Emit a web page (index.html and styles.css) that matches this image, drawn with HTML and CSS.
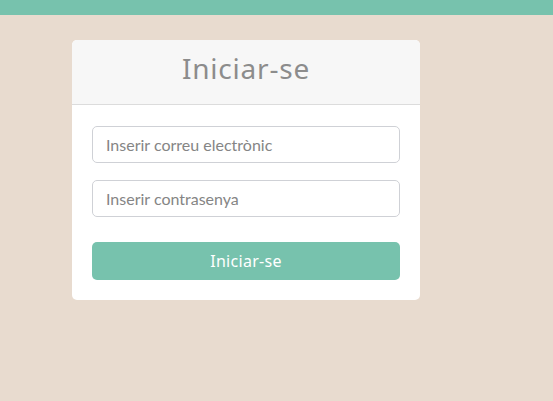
FILE: index.html
```html
<!DOCTYPE html>
<html lang="ca">
<head>
<meta charset="utf-8">
<title>Iniciar-se</title>
<link rel="stylesheet" href="styles.css">
</head>
<body>
<div class="topbar"></div>
<main class="page">
  <section class="card">
    <header class="card-header"><h1 class="title">Iniciar-se</h1></header>
    <form class="card-body">
      <input class="field" type="email" placeholder="Inserir correu electrònic">
      <input class="field" type="password" placeholder="Inserir contrasenya">
      <button class="btn" type="button">Iniciar-se</button>
    </form>
  </section>
</main>
</body>
</html>
```
FILE: styles.css
```css
* { box-sizing: border-box; }
html, body { margin: 0; padding: 0; }
body {
  background: #e8dbcf;
  font-family: "Open Sans", "Liberation Sans", sans-serif;
  height: 401px;
}
.topbar { height: 15px; background: #77c2ad; }
.page { padding: 25px 0 0 72px; }
.card {
  width: 348px;
  background: #fff;
  border-radius: 5px;
  overflow: hidden;
}
.card-header {
  height: 65px;
  background: #f7f7f7;
  border-bottom: 1px solid #dcdcdc;
  display: flex;
  justify-content: center;
  align-items: center;
}
.title {
  margin: 0;
  font-family: "Noto Sans", "Open Sans", sans-serif;
  font-weight: 400;
  font-size: 28px;
  color: #8c8c8c;
  letter-spacing: 0.8px;
  padding-bottom: 9px;
}
.card-body {
  padding: 21px 20px 20px;
  display: flex;
  flex-direction: column;
}
.field {
  height: 37px;
  border: 1px solid #cfd1d6;
  border-radius: 5px;
  padding: 0 13px;
  font-family: "Lato", "Open Sans", sans-serif;
  font-size: 16px;
  color: #555;
  margin-bottom: 17px;
}
.field::placeholder { color: #858585; }
.field:nth-of-type(2) { margin-bottom: 25px; }
.btn {
  height: 38px;
  border: none;
  border-radius: 5px;
  background: #77c2ad;
  color: #fff;
  font-family: "Noto Sans", "Open Sans", sans-serif;
  font-size: 16px;
  letter-spacing: 0.3px;
}
```
